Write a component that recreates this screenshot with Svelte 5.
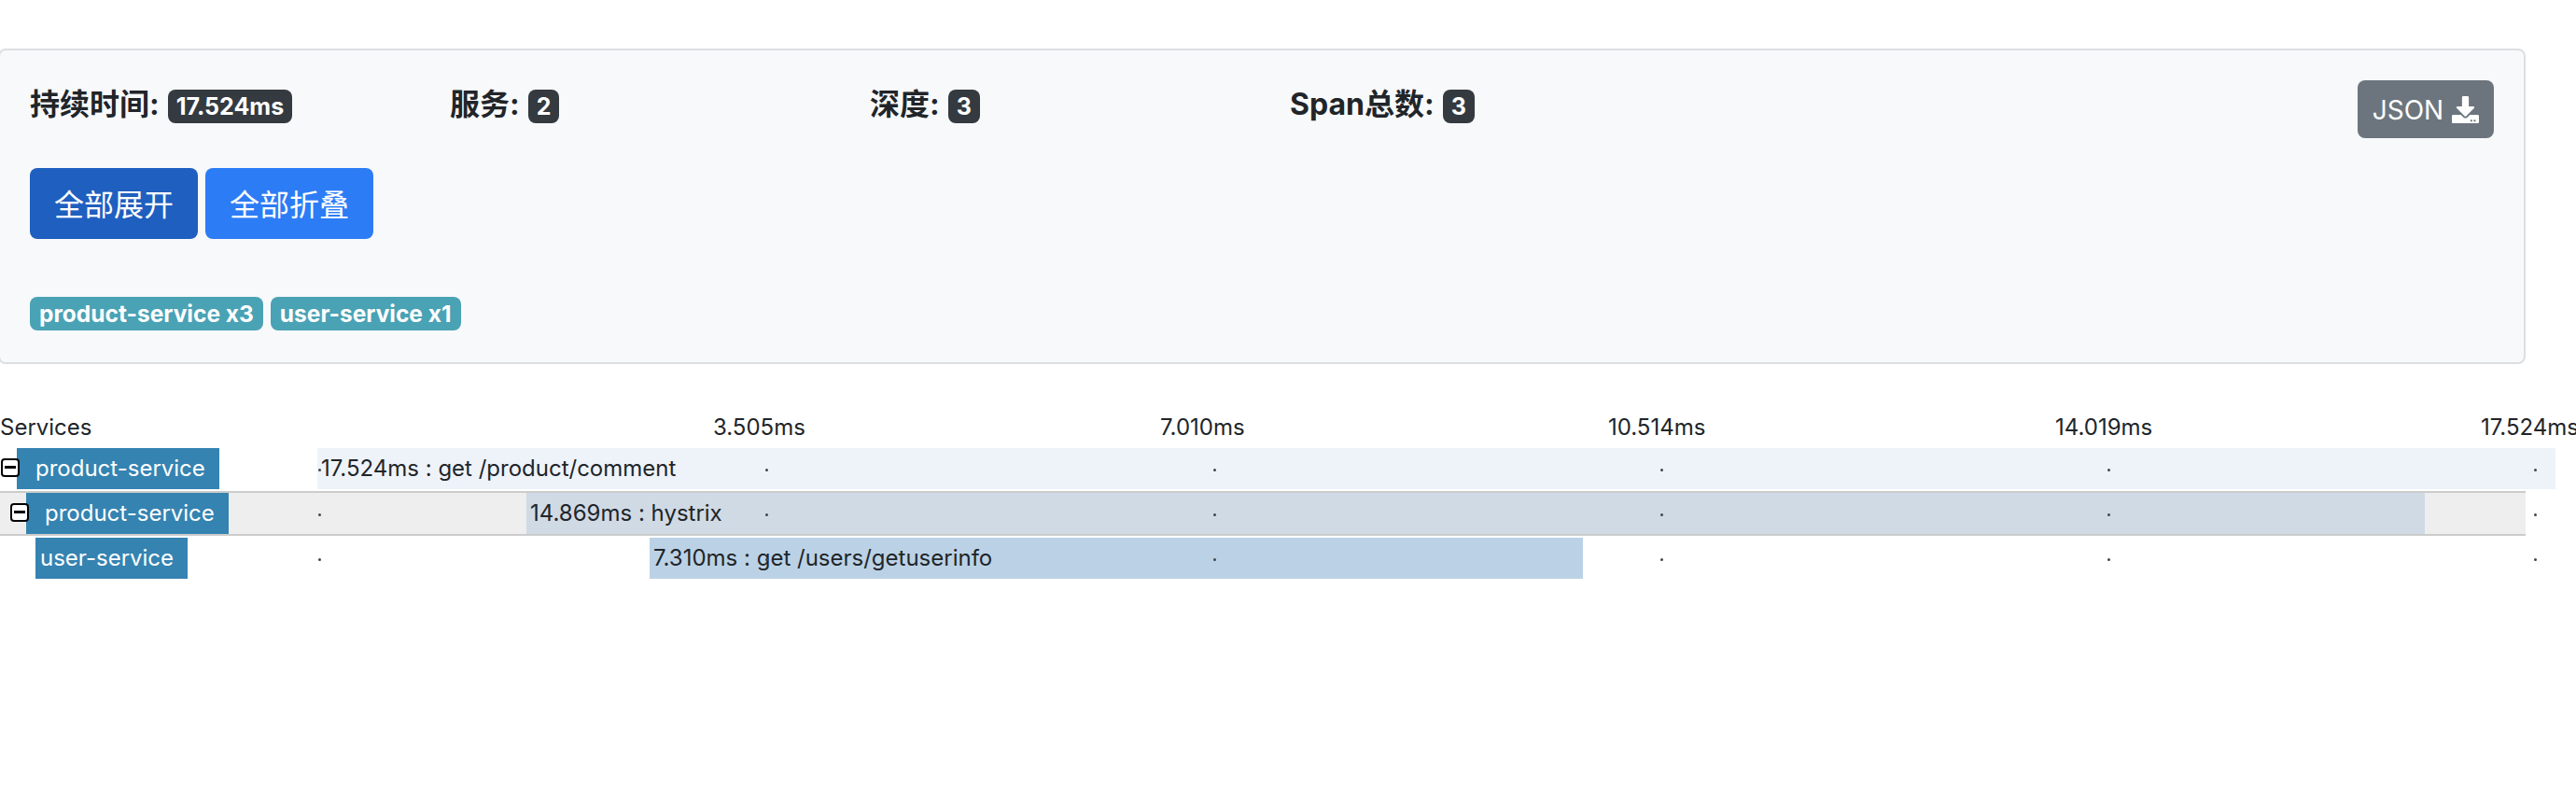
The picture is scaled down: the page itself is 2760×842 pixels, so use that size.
<script>
  const stats = [
    { label: '持续时间:', value: '17.524ms' },
    { label: '服务:', value: '2' },
    { label: '深度:', value: '3' },
    { label: 'Span总数:', value: '3' }
  ];
  const tags = ['product-service x3', 'user-service x1'];
  const axis = [
    { text: '3.505ms', left: 764 },
    { text: '7.010ms', left: 1243 },
    { text: '10.514ms', left: 1723 },
    { text: '14.019ms', left: 2202 },
    { text: '17.524ms', left: 2658 }
  ];
  const dots = [341, 820, 1300, 1779, 2258, 2715];
  const rows = [
    { name: 'product-service', indent: 18, pad: 20, toggle: true, start: 340, end: 2738, color: '#eef3fa', text: '17.524ms : get /product/comment' },
    { name: 'product-service', indent: 28, pad: 20, toggle: true, start: 564, end: 2598, color: '#d0dae5', text: '14.869ms : hystrix', hover: true },
    { name: 'user-service', indent: 38, pad: 5, toggle: false, start: 696, end: 1696, color: '#bbd2e6', text: '7.310ms : get /users/getuserinfo' }
  ];
</script>

<div class="page">
  <section class="panel">
    <div class="stats">
      {#each stats as s}
        <div class="stat">
          <strong>{s.label}</strong>
          <span class="badge">{s.value}</span>
        </div>
      {/each}
      <button class="json">
        JSON
        <svg viewBox="0 0 512 512" width="29" height="29" aria-hidden="true">
          <path fill="currentColor" d="M216 0h80c13.3 0 24 10.7 24 24v168h87.7c17.8 0 26.7 21.5 14.1 34.1L269.7 378.3c-7.5 7.5-19.8 7.5-27.3 0L90.1 226.1c-12.6-12.6-3.7-34.1 14.1-34.1H192V24c0-13.3 10.7-24 24-24zm296 376v112c0 13.3-10.7 24-24 24H24c-13.3 0-24-10.7-24-24V376c0-13.3 10.7-24 24-24h146.7l49 49c20.1 20.1 52.5 20.1 72.6 0l49-49H488c13.3 0 24 10.7 24 24zm-124 88c0-11-9-20-20-20s-20 9-20 20 9 20 20 20 20-9 20-20zm64 0c0-11-9-20-20-20s-20 9-20 20 9 20 20 20 20-9 20-20z"/>
        </svg>
      </button>
    </div>
    <div class="actions">
      <button class="btn active">全部展开</button>
      <button class="btn">全部折叠</button>
    </div>
    <div class="tags">
      {#each tags as t}
        <span class="tag">{t}</span>
      {/each}
    </div>
  </section>

  <div class="timeline">
    <div class="axis">
      <span>Services</span>
      {#each axis as a}
        <span class="tick" style="left: {a.left}px">{a.text}</span>
      {/each}
    </div>
    {#each rows as r}
      <div class="row" class:hover={r.hover}>
        <div class="service" style="margin-left: {r.indent}px; padding-left: {r.pad}px">
          {#if r.toggle}
            <i class="toggle"></i>
          {/if}
          {r.name}
        </div>
        <div class="bar" style="left: {r.start}px; width: {r.end - r.start}px; background: {r.color}">{r.text}</div>
        {#each dots as d}
          <i class="dot" style="left: {d}px"></i>
        {/each}
      </div>
    {/each}
  </div>
</div>

<style>
  :global(body) {
    margin: 0;
    background: #fff;
    overflow: hidden;
  }
  .page {
    width: 2760px;
    height: 842px;
    overflow: hidden;
    padding-top: 52px;
    box-sizing: border-box;
    font-family: Inter, "Noto Sans CJK SC", sans-serif;
    color: #212529;
    font-size: 24px;
  }
  .panel {
    width: 2708px;
    margin-left: -2px;
    box-sizing: border-box;
    border: 2px solid #dcdfe1;
    border-radius: 8px;
    background: #f8f9fa;
    padding: 32px 32px 34px 32px;
  }
  .stats {
    display: flex;
    align-items: flex-start;
  }
  .stat {
    width: 450px;
    display: flex;
    align-items: center;
    gap: 9px;
    height: 36px;
    margin-top: 10px;
  }
  .stat strong {
    font-size: 32px;
    line-height: 36px;
    font-weight: 700;
    padding-bottom: 5px;
  }
  .badge {
    background: #343a40;
    color: #fff;
    font-weight: 700;
    font-size: 25px;
    line-height: 36px;
    padding: 0 9px;
    border-radius: 8px;
  }
  .json {
    margin-left: auto;
    height: 62px;
    width: 146px;
    border: none;
    border-radius: 8px;
    background: #6c757d;
    color: #fff;
    font: 28px Inter, sans-serif;
    display: flex;
    align-items: center;
    justify-content: center;
    gap: 9px;
    padding: 1px 0 0;
  }
  .actions {
    display: flex;
    gap: 8px;
    margin-top: 32px;
  }
  .btn {
    width: 180px;
    height: 76px;
    border: none;
    border-radius: 8px;
    background: #2c7cf6;
    color: #fff;
    font: 32px "Noto Sans CJK SC", sans-serif;
    padding: 0 0 2px;
  }
  .btn.active {
    background: #1f5fbf;
  }
  .tags {
    display: flex;
    gap: 8px;
    margin-top: 62px;
  }
  .tag {
    background: #4aa2b5;
    color: #fff;
    font-weight: 700;
    font-size: 24.5px;
    line-height: 36px;
    padding: 0 10px;
    border-radius: 8px;
  }
  .timeline {
    margin-top: 50px;
    width: 2706px;
  }
  .axis {
    position: relative;
    height: 38px;
    line-height: 36px;
  }
  .tick {
    position: absolute;
    top: 0;
    white-space: nowrap;
  }
  .row {
    position: relative;
    height: 44px;
    border-top: 2px solid transparent;
    border-bottom: 2px solid transparent;
    display: flex;
  }
  .row.hover {
    background: #eeeeee;
    border-color: #cccccc;
  }
  .service {
    position: relative;
    background: #3583b1;
    color: #fff;
    line-height: 44px;
    padding-right: 15px;
    white-space: nowrap;
  }
  .toggle {
    position: absolute;
    left: -17px;
    top: 11px;
    width: 20px;
    height: 20px;
    box-sizing: border-box;
    border: 2.5px solid #000;
    border-radius: 4px;
    background: #fff;
  }
  .toggle::after {
    content: "";
    position: absolute;
    left: 2px;
    right: 2px;
    top: 6px;
    height: 3px;
    background: #000;
  }
  .bar {
    position: absolute;
    top: 0;
    height: 44px;
    line-height: 44px;
    padding-left: 4px;
    box-sizing: border-box;
    white-space: nowrap;
  }
  .dot {
    position: absolute;
    top: 22px;
    width: 3px;
    height: 3px;
    border-radius: 50%;
    background: #444;
  }
</style>
